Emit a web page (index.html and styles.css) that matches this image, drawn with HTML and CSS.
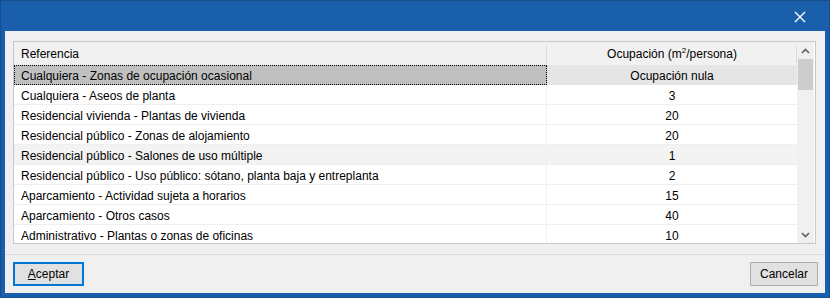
FILE: index.html
```html
<!DOCTYPE html>
<html lang="es">
<head>
  <meta charset="UTF-8" />
  <title>Ocupación</title>
  <link rel="stylesheet" href="styles.css">
</head>
<body>
  <div class="window">
    <div class="titlebar">
      <svg class="close" width="12" height="12" viewBox="0 0 12 12">
        <path d="M1 1 L11 11 M11 1 L1 11" stroke="#fff" stroke-width="1.4" fill="none"/>
      </svg>
    </div>
    <div class="client">
      <div class="grid">
        <div class="table">
          <div class="row head">
            <div class="c1">Referencia</div>
            <div class="c2">Ocupación (m<sup>2</sup>/persona)</div>
          </div>
          <div class="row sel">
            <div class="c1"><span class="focus">Cualquiera - Zonas de ocupación ocasional</span></div>
            <div class="c2">Ocupación nula</div>
          </div>
          <div class="row">
            <div class="c1">Cualquiera - Aseos de planta</div>
            <div class="c2">3</div>
          </div>
          <div class="row">
            <div class="c1">Residencial vivienda - Plantas de vivienda</div>
            <div class="c2">20</div>
          </div>
          <div class="row">
            <div class="c1">Residencial público - Zonas de alojamiento</div>
            <div class="c2">20</div>
          </div>
          <div class="row hover">
            <div class="c1">Residencial público - Salones de uso múltiple</div>
            <div class="c2">1</div>
          </div>
          <div class="row">
            <div class="c1">Residencial público - Uso público: sótano, planta baja y entreplanta</div>
            <div class="c2">2</div>
          </div>
          <div class="row">
            <div class="c1">Aparcamiento - Actividad sujeta a horarios</div>
            <div class="c2">15</div>
          </div>
          <div class="row">
            <div class="c1">Aparcamiento - Otros casos</div>
            <div class="c2">40</div>
          </div>
          <div class="row">
            <div class="c1">Administrativo - Plantas o zonas de oficinas</div>
            <div class="c2">10</div>
          </div>
        </div>
        <div class="scrollbar">
          <div class="arrow">
            <svg width="9" height="6" viewBox="0 0 9 6"><path d="M1 5 L4.5 1.5 L8 5" stroke="#606060" stroke-width="1.6" fill="none"/></svg>
          </div>
          <div class="thumb"></div>
          <div class="track"></div>
          <div class="arrow">
            <svg width="9" height="6" viewBox="0 0 9 6"><path d="M1 1 L4.5 4.5 L8 1" stroke="#606060" stroke-width="1.6" fill="none"/></svg>
          </div>
        </div>
      </div>
      <div class="footer">
        <button class="btn default"><u>A</u>ceptar</button>
        <button class="btn">Cancelar</button>
      </div>
    </div>
  </div>
</body>
</html>
```

FILE: styles.css
```css
body {
  margin: 0;
  font-family: "Liberation Sans", Arial, sans-serif;
  font-size: 12px;
  color: #000;
}
.window {
  width: 830px;
  height: 298px;
  box-sizing: border-box;
  background: #1a5fab;
  border: 1px solid #174f8e;
  display: flex;
  flex-direction: column;
}
.titlebar {
  height: 30px;
  display: flex;
  justify-content: flex-end;
  align-items: center;
}
.close {
  margin-right: 23px;
  margin-top: 2px;
}
.client {
  flex: 1;
  margin: 0 4px 4px 4px;
  background: #f0f0f0;
  display: flex;
  flex-direction: column;
}
.grid {
  margin: 10px 9px 0 8px;
  height: 203px;
  box-sizing: border-box;
  border: 1px solid #c8c8c8;
  background: #fff;
  display: flex;
}
.table {
  width: 783px;
  overflow: hidden;
}
.row {
  display: flex;
  height: 20px;
  line-height: 18px;
  padding-top: 2px;
  border-bottom: 1px solid #efefef;
  box-sizing: border-box;
}
.row:last-child {
  border-bottom: none;
}
.c1 {
  width: 533px;
  box-sizing: border-box;
  padding-left: 7px;
  border-right: 1px solid #efefef;
  white-space: nowrap;
  margin-top: -2px;
  padding-top: 2px;
}
.c2 {
  width: 250px;
  text-align: center;
}
.head {
  height: 23px;
  line-height: 21px;
  background: #f1f1f1;
  border-bottom: none;
}
.head .c1 {
  border-right: none;
  position: relative;
}
.head .c1::after {
  content: "";
  position: absolute;
  right: 0;
  top: 4px;
  height: 17px;
  border-right: 1px solid #dadada;
}
.head .c2 {
  position: relative;
}
.head .c2::after {
  content: "";
  position: absolute;
  right: 0;
  top: 2px;
  height: 17px;
  border-right: 1px solid #dadada;
}
sup {
  font-size: 8px;
  line-height: 0;
}
.sel {
  border-bottom: none;
  padding-top: 0;
}
.sel .c1 {
  background: #c0c0c0;
  padding: 0;
  margin-top: 0;
  border-right: none;
}
.focus {
  display: block;
  height: 20px;
  box-sizing: border-box;
  border: 1px dotted #000;
  padding: 1px 0 0 6px;
  line-height: 18px;
}
.sel .c2 {
  background: #e5e5e5;
  padding-top: 2px;
}
.hover {
  background: #f3f3f3;
}
.scrollbar {
  width: 17px;
  background: #f0f0f0;
  display: flex;
  flex-direction: column;
}
.arrow {
  height: 17px;
  display: flex;
  align-items: center;
  justify-content: center;
}
.thumb {
  height: 31px;
  margin: 0 1px;
  background: #cdcdcd;
}
.track {
  flex: 1;
}
.footer {
  margin-top: 10px;
  border-top: 1px solid #dadada;
  flex: 1;
  display: flex;
  justify-content: space-between;
  align-items: flex-start;
  padding: 7px 7px 0 8px;
}
.btn {
  height: 24px;
  font-family: "Liberation Sans", Arial, sans-serif;
  font-size: 12px;
  background: #e1e1e1;
  border: 1px solid #adadad;
  color: #000;
  padding: 0;
}
.btn.default {
  width: 71px;
  border: 2px solid #0078d7;
}
.btn:last-child {
  width: 68px;
}
```
